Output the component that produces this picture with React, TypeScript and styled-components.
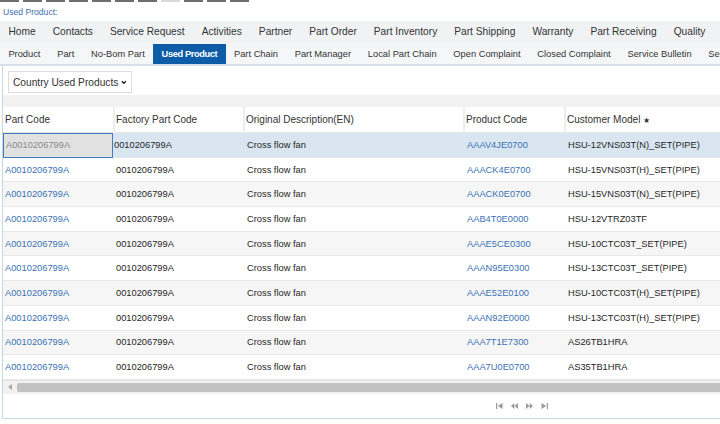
import React from "react";
import styled, { createGlobalStyle } from "styled-components";

const GlobalStyle = createGlobalStyle`
  html, body {
    margin: 0;
    padding: 0;
    background: #ffffff;
    overflow: hidden;
  }
  body {
    font-family: "Liberation Sans", Arial, sans-serif;
    color: #333333;
  }
`;

const Page = styled.div`
  width: 1040px;
`;

const ToolStrip = styled.div`
  display: flex;
  gap: 4px;
  height: 3px;
`;

const ToolButton = styled.div<{ $muted?: boolean }>`
  width: 19px;
  height: 2px;
  background: ${(p) => (p.$muted ? "#dadada" : "#6e6e6e")};
`;

const Crumb = styled.div`
  height: 18px;
  line-height: 18px;
  padding-left: 3px;
  font-size: 8.6px;
  color: #3b6fae;
`;

const MainTabs = styled.div`
  display: flex;
  height: 22px;
  background: #f0f2f4;
`;

const MainTab = styled.div`
  padding: 0 8.5px;
  line-height: 22px;
  font-size: 10.2px;
  color: #333333;
  white-space: nowrap;
`;

const SubTabs = styled.div`
  display: flex;
  height: 21px;
  background: #f5f6f8;
  border-bottom: 2px solid #d7e1eb;
`;

const SubTab = styled.div<{ $active?: boolean }>`
  padding: 0 8.4px;
  margin-top: 1px;
  line-height: 20px;
  font-size: 9.3px;
  white-space: nowrap;
  color: ${(p) => (p.$active ? "#ffffff" : "#333333")};
  background: ${(p) => (p.$active ? "#0c5ca8" : "transparent")};
  font-weight: ${(p) => (p.$active ? 700 : 400)};
  letter-spacing: ${(p) => (p.$active ? "-0.4px" : "0")};
`;

const Panel = styled.div`
  margin-left: 2px;
  border-left: 1px solid #c6d6e7;
  border-bottom: 1px solid #c6d6e7;
`;

const FilterBar = styled.div`
  padding: 5px 0 2px 5px;
`;

const Select = styled.div`
  display: inline-flex;
  align-items: center;
  gap: 3px;
  box-sizing: border-box;
  height: 22px;
  width: 124px;
  padding: 0 4px;
  border: 1px solid #dcdcdc;
  font-size: 10.2px;
  color: #333333;
  white-space: nowrap;
`;

const Band = styled.div`
  height: 12px;
  background: #f2f2f2;
`;

const cols = "110px 130px 220px 101px 1fr";

const HeadRow = styled.div`
  display: grid;
  grid-template-columns: ${cols};
  height: 26px;
  box-sizing: border-box;
  border-bottom: 1px solid #e6e6e6;
  background: #ffffff;
`;

const HeadCell = styled.div<{ $first?: boolean }>`
  padding-left: ${(p) => (p.$first ? "2px" : "1px")};
  border-left: ${(p) => (p.$first ? "none" : "2px solid #eeeeee")};
  line-height: 25px;
  font-size: 10px;
  color: #333333;
  white-space: nowrap;
`;

const Star = styled.span`
  font-size: 8px;
  margin-left: 3px;
`;

const Row = styled.div<{ $selected?: boolean; $alt?: boolean }>`
  display: grid;
  grid-template-columns: ${cols};
  height: 24.7px;
  box-sizing: border-box;
  border-bottom: 1px solid #e8e8e8;
  background: ${(p) => (p.$selected ? "#d9e6f2" : p.$alt ? "#f6f6f6" : "#ffffff")};
`;

const Cell = styled.div<{ $link?: boolean; $focus?: boolean; $pad?: number }>`
  padding-left: ${(p) => p.$pad ?? 3}px;
  display: flex;
  align-items: center;
  font-size: 9.3px;
  white-space: nowrap;
  box-sizing: border-box;
  color: ${(p) => (p.$focus ? "#8a8a8a" : p.$link ? "#3a72b5" : "#262626")};
  background: ${(p) => (p.$focus ? "#e1e1e1" : "transparent")};
  border: ${(p) => (p.$focus ? "1.5px solid #3f7cc0" : "none")};
  margin-bottom: ${(p) => (p.$focus ? "-1px" : "0")};
`;

const ScrollBar = styled.div`
  display: flex;
  align-items: center;
  height: 14px;
  background: #f1f1f1;
  border-top: 1px solid #e2e2e2;
  box-sizing: border-box;
`;

const ScrollArrow = styled.div`
  width: 14px;
  display: flex;
  justify-content: center;
`;

const ScrollThumb = styled.div`
  flex: 1;
  height: 9px;
  background: #c2c2c2;
  border-radius: 2px 0 0 2px;
`;

const Pager = styled.div`
  display: flex;
  justify-content: center;
  align-items: center;
  gap: 8px;
  height: 24px;
`;

const PagerIcon = styled.svg`
  width: 7px;
  height: 6px;
  fill: #9a9a9a;
`;

const Chevron = () => (
  <svg width="9" height="7" viewBox="0 0 9 7">
    <path d="M1.2 1.5 L4.5 4.8 L7.8 1.5" stroke="#222" strokeWidth="2" fill="none" />
  </svg>
);

const rows = [
  ["AAAV4JE0700", "HSU-12VNS03T(N)_SET(PIPE)"],
  ["AAACK4E0700", "HSU-15VNS03T(H)_SET(PIPE)"],
  ["AAACK0E0700", "HSU-15VNS03T(N)_SET(PIPE)"],
  ["AAB4T0E0000", "HSU-12VTRZ03TF"],
  ["AAAE5CE0300", "HSU-10CTC03T_SET(PIPE)"],
  ["AAAN95E0300", "HSU-13CTC03T_SET(PIPE)"],
  ["AAAE52E0100", "HSU-10CTC03T(H)_SET(PIPE)"],
  ["AAAN92E0000", "HSU-13CTC03T(H)_SET(PIPE)"],
  ["AAA7T1E7300", "AS26TB1HRA"],
  ["AAA7U0E0700", "AS35TB1HRA"],
];

const mainTabs = [
  "Home",
  "Contacts",
  "Service Request",
  "Activities",
  "Partner",
  "Part Order",
  "Part Inventory",
  "Part Shipping",
  "Warranty",
  "Part Receiving",
  "Quality",
];

const subTabs = [
  "Product",
  "Part",
  "No-Bom Part",
  "Used Product",
  "Part Chain",
  "Part Manager",
  "Local Part Chain",
  "Open Complaint",
  "Closed Complaint",
  "Service Bulletin",
  "Service Policy",
];

export default function App() {
  return (
    <Page>
      <GlobalStyle />
      <ToolStrip>
        {Array.from({ length: 11 }).map((_, i) => (
          <ToolButton key={i} $muted={i === 7} />
        ))}
      </ToolStrip>
      <Crumb>Used Product:</Crumb>
      <MainTabs>
        {mainTabs.map((t) => (
          <MainTab key={t}>{t}</MainTab>
        ))}
      </MainTabs>
      <SubTabs>
        {subTabs.map((t) => (
          <SubTab key={t} $active={t === "Used Product"}>
            {t}
          </SubTab>
        ))}
      </SubTabs>
      <Panel>
        <FilterBar>
          <Select>
            Country Used Products
            <Chevron />
          </Select>
        </FilterBar>
        <Band />
        <HeadRow>
          <HeadCell $first>Part Code</HeadCell>
          <HeadCell>Factory Part Code</HeadCell>
          <HeadCell>Original Description(EN)</HeadCell>
          <HeadCell>Product Code</HeadCell>
          <HeadCell>
            Customer Model<Star>★</Star>
          </HeadCell>
        </HeadRow>
        {rows.map(([code, model], i) => (
          <Row key={i} $selected={i === 0} $alt={i % 2 === 0 && i > 0}>
            <Cell $link $focus={i === 0} $pad={2}>
              A0010206799A
            </Cell>
            <Cell $pad={i === 0 ? 1 : 3}>0010206799A</Cell>
            <Cell $pad={4}>Cross flow fan</Cell>
            <Cell $link $pad={4}>
              {code}
            </Cell>
            <Cell $pad={4}>{model}</Cell>
          </Row>
        ))}
        <ScrollBar>
          <ScrollArrow>
            <svg width="4" height="6" viewBox="0 0 4 6">
              <path d="M4 0 L0 3 L4 6 Z" fill="#a8a8a8" />
            </svg>
          </ScrollArrow>
          <ScrollThumb />
        </ScrollBar>
        <Pager>
          <PagerIcon viewBox="0 0 7 6">
            <rect x="0" y="0" width="1.2" height="6" />
            <path d="M6.5 0 L1.8 3 L6.5 6 Z" />
          </PagerIcon>
          <PagerIcon viewBox="0 0 7 6">
            <path d="M3.4 0 L0 3 L3.4 6 Z" />
            <path d="M7 0 L3.6 3 L7 6 Z" />
          </PagerIcon>
          <PagerIcon viewBox="0 0 7 6">
            <path d="M0 0 L3.4 3 L0 6 Z" />
            <path d="M3.6 0 L7 3 L3.6 6 Z" />
          </PagerIcon>
          <PagerIcon viewBox="0 0 7 6">
            <path d="M0.5 0 L5.2 3 L0.5 6 Z" />
            <rect x="5.8" y="0" width="1.2" height="6" />
          </PagerIcon>
        </Pager>
      </Panel>
    </Page>
  );
}
